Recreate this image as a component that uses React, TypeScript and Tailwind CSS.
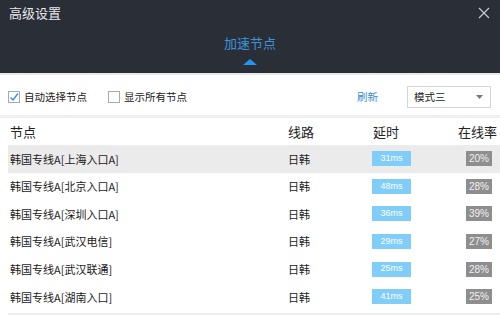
import React from "react";

const rows = [
  { name: "韩国专线A[上海入口A]", line: "日韩", ms: "31ms", rate: "20%" },
  { name: "韩国专线A[北京入口A]", line: "日韩", ms: "48ms", rate: "28%" },
  { name: "韩国专线A[深圳入口A]", line: "日韩", ms: "36ms", rate: "39%" },
  { name: "韩国专线A[武汉电信]", line: "日韩", ms: "29ms", rate: "27%" },
  { name: "韩国专线A[武汉联通]", line: "日韩", ms: "25ms", rate: "28%" },
  { name: "韩国专线A[湖南入口]", line: "日韩", ms: "41ms", rate: "25%" },
];

const font = { fontFamily: '"Microsoft YaHei", "Noto Sans CJK SC", "Noto Sans", sans-serif' };

export default function App() {
  return (
    <div className="w-[500px] h-[317px] bg-white overflow-hidden flex flex-col" style={font}>
      <div className="h-[73px] bg-[#2a2e37] flex flex-col relative">
        <div className="flex items-center justify-between pl-[9px] pr-[10px] pt-[2px] h-[22px]">
          <span className="text-[13px] text-[#e6e8ec] leading-none">高级设置</span>
          <svg width="12" height="12" viewBox="0 0 12 12" className="mt-[2px]">
            <path d="M1 1 L11 11 M11 1 L1 11" stroke="#c8cbd0" strokeWidth="1.2" />
          </svg>
        </div>
        <div className="flex flex-col items-center mt-[14px]">
          <span className="text-[13px] text-[#3f93d8] leading-none">加速节点</span>
          <svg width="14" height="6" viewBox="0 0 14 6" className="mt-[10px]">
            <path d="M0 6 L7 0 L14 6 Z" fill="#2196f3" />
          </svg>
        </div>
      </div>
      <div className="h-[2px] bg-[#e9e9e9]" />
      <div className="h-[40px] flex items-center pl-[8px] pr-[9px] pt-[4px]">
        <label className="flex items-center gap-[4px]">
          <span className="w-[12px] h-[12px] border border-[#a9a9a9] bg-white flex items-center justify-center">
            <svg width="10" height="10" viewBox="0 0 10 10">
              <path d="M1.5 5.5 L4 8 L9 1.5" stroke="#3b8ee0" strokeWidth="1.4" fill="none" />
            </svg>
          </span>
          <span className="text-[10.5px] text-[#222]">自动选择节点</span>
        </label>
        <label className="flex items-center gap-[4px] ml-[21px]">
          <span className="w-[12px] h-[12px] border border-[#a9a9a9] bg-white" />
          <span className="text-[10.5px] text-[#222]">显示所有节点</span>
        </label>
        <span className="ml-auto text-[10.5px] text-[#3d8fd4]">刷新</span>
        <div className="ml-[29px] w-[84px] h-[22px] border border-[#d5d5d5] flex items-center pl-[6px] pr-[7px]">
          <span className="text-[10.5px] text-[#222]">模式三</span>
          <svg width="7" height="4" viewBox="0 0 7 4" className="ml-auto">
            <path d="M0 0 L7 0 L3.5 4 Z" fill="#777" />
          </svg>
        </div>
      </div>
      <div className="h-[3px] bg-[#f0f0f0]" />
      <div className="h-[27px] flex items-center pl-[10px] text-[13px] text-[#222]">
        <span className="w-[278px]">节点</span>
        <span className="w-[85px]">线路</span>
        <span className="w-[85px]">延时</span>
        <span>在线率</span>
      </div>
      <div className="flex flex-col">
        {rows.map((r, i) => (
          <div
            key={i}
            className={`h-[27.6px] ml-[8px] pl-[2px] flex items-center text-[11px] text-[#1a1a1a] ${i === 0 ? "bg-[#ebebeb]" : ""}`}
          >
            <span className="w-[278px]">{r.name}</span>
            <span className="w-[84px]">{r.line}</span>
            <span className="w-[39px] h-[15px] bg-[#80cdf8] text-white text-[9px] flex items-center justify-center" style={{ fontFamily: '"Liberation Sans", sans-serif' }}>{r.ms}</span>
            <span className="ml-[55px] w-[26px] h-[15px] bg-[#8e8e8e] text-[#f2f2f2] text-[10px] flex items-center justify-center" style={{ fontFamily: '"Liberation Sans", sans-serif' }}>{r.rate}</span>
          </div>
        ))}
      </div>
      <div className="h-[2px] ml-[8px] bg-[#eeeeee] mt-[2px]" />
    </div>
  );
}
